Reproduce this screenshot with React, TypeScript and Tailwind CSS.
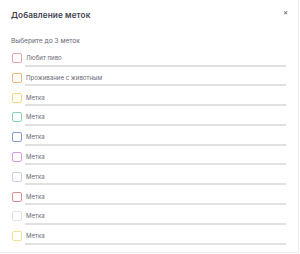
const tags = [
  { label: "Любит пиво", color: "border-[#eaa3a6]" },
  { label: "Проживание с животным", color: "border-[#f6b57c]" },
  { label: "Метка", color: "border-[#f8d77c]" },
  { label: "Метка", color: "border-[#82d5b3]" },
  { label: "Метка", color: "border-[#7f9bd1]" },
  { label: "Метка", color: "border-[#d99bdb]" },
  { label: "Метка", color: "border-[#c8cdea]" },
  { label: "Метка", color: "border-[#d98f92]" },
  { label: "Метка", color: "border-[#e2e2e2]" },
  { label: "Метка", color: "border-[#f1e28f]" },
];

export default function App() {
  return (
    <div className="w-[300px] h-[254px] bg-white font-['Inter',sans-serif]">
      <div className="w-[299px] h-[253px] bg-white border-r border-b border-[#ececec] pl-[11px] pr-[12px] pt-[8px]">
        <div className="flex items-center justify-between h-[14px]">
          <h1 className="text-[8.2px] font-semibold text-[#43434f] tracking-[0.1px]">Добавление меток</h1>
          <span className="text-[7px] font-semibold leading-none text-[#6b6b78] mr-[-2px] mb-[6px]">×</span>
        </div>
        <p className="mt-[13px] text-[6.6px] text-[#666672] leading-[12px]">Выберите до 3 меток</p>
        <div className="mt-[4px] flex flex-col">
          {tags.map((t, i) => (
            <div key={i} className="flex items-start h-[19.8px]">
              <div className={`mt-[2px] ml-[1px] w-[10px] h-[10px] rounded-[2px] border ${t.color} shrink-0`} />
              <div className="ml-[3px] flex-1 h-[15.5px] border-b-2 border-[#e1e1e1] text-[6.1px] leading-[14px] text-[#6a6a75] pl-[1px]">
                {t.label}
              </div>
            </div>
          ))}
        </div>
      </div>
    </div>
  );
}
